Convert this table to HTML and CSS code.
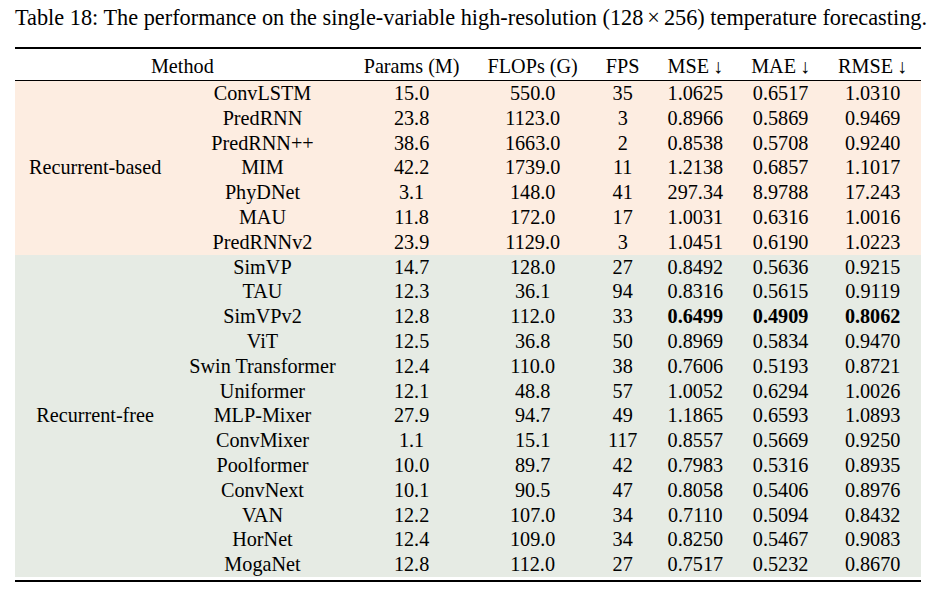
FILE: index.html
```html
<!DOCTYPE html>
<html>
<head>
<meta charset="utf-8">
<link rel="stylesheet" href="styles.css">
</head>
<body>
<div class="caption">Table 18: The performance on the single-variable high-resolution (128<span class="times">×</span>256) temperature forecasting.</div>
<table class="results">
  <thead>
    <tr>
      <th colspan="2">Method</th>
      <th>Params (M)</th>
      <th>FLOPs (G)</th>
      <th>FPS</th>
      <th>MSE<span class="arrow">↓</span></th>
      <th>MAE<span class="arrow">↓</span></th>
      <th>RMSE<span class="arrow">↓</span></th>
    </tr>
  </thead>
  <tbody class="group-rb">
    <tr><td class="group" rowspan="7">Recurrent-based</td><td>ConvLSTM</td><td>15.0</td><td>550.0</td><td>35</td><td>1.0625</td><td>0.6517</td><td>1.0310</td></tr>
    <tr><td>PredRNN</td><td>23.8</td><td>1123.0</td><td>3</td><td>0.8966</td><td>0.5869</td><td>0.9469</td></tr>
    <tr><td>PredRNN++</td><td>38.6</td><td>1663.0</td><td>2</td><td>0.8538</td><td>0.5708</td><td>0.9240</td></tr>
    <tr><td>MIM</td><td>42.2</td><td>1739.0</td><td>11</td><td>1.2138</td><td>0.6857</td><td>1.1017</td></tr>
    <tr><td>PhyDNet</td><td>3.1</td><td>148.0</td><td>41</td><td>297.34</td><td>8.9788</td><td>17.243</td></tr>
    <tr><td>MAU</td><td>11.8</td><td>172.0</td><td>17</td><td>1.0031</td><td>0.6316</td><td>1.0016</td></tr>
    <tr><td>PredRNNv2</td><td>23.9</td><td>1129.0</td><td>3</td><td>1.0451</td><td>0.6190</td><td>1.0223</td></tr>
  </tbody>
  <tbody class="group-rf">
    <tr><td class="group" rowspan="13">Recurrent-free</td><td>SimVP</td><td>14.7</td><td>128.0</td><td>27</td><td>0.8492</td><td>0.5636</td><td>0.9215</td></tr>
    <tr><td>TAU</td><td>12.3</td><td>36.1</td><td>94</td><td>0.8316</td><td>0.5615</td><td>0.9119</td></tr>
    <tr><td>SimVPv2</td><td>12.8</td><td>112.0</td><td>33</td><td class="best">0.6499</td><td class="best">0.4909</td><td class="best">0.8062</td></tr>
    <tr><td>ViT</td><td>12.5</td><td>36.8</td><td>50</td><td>0.8969</td><td>0.5834</td><td>0.9470</td></tr>
    <tr><td>Swin Transformer</td><td>12.4</td><td>110.0</td><td>38</td><td>0.7606</td><td>0.5193</td><td>0.8721</td></tr>
    <tr><td>Uniformer</td><td>12.1</td><td>48.8</td><td>57</td><td>1.0052</td><td>0.6294</td><td>1.0026</td></tr>
    <tr><td>MLP-Mixer</td><td>27.9</td><td>94.7</td><td>49</td><td>1.1865</td><td>0.6593</td><td>1.0893</td></tr>
    <tr><td>ConvMixer</td><td>1.1</td><td>15.1</td><td>117</td><td>0.8557</td><td>0.5669</td><td>0.9250</td></tr>
    <tr><td>Poolformer</td><td>10.0</td><td>89.7</td><td>42</td><td>0.7983</td><td>0.5316</td><td>0.8935</td></tr>
    <tr><td>ConvNext</td><td>10.1</td><td>90.5</td><td>47</td><td>0.8058</td><td>0.5406</td><td>0.8976</td></tr>
    <tr><td>VAN</td><td>12.2</td><td>107.0</td><td>34</td><td>0.7110</td><td>0.5094</td><td>0.8432</td></tr>
    <tr><td>HorNet</td><td>12.4</td><td>109.0</td><td>34</td><td>0.8250</td><td>0.5467</td><td>0.9083</td></tr>
    <tr><td>MogaNet</td><td>12.8</td><td>112.0</td><td>27</td><td>0.7517</td><td>0.5232</td><td>0.8670</td></tr>
  </tbody>
  <tfoot>
    <tr><td class="spacer" colspan="8"></td></tr>
  </tfoot>
</table>
</body>
</html>
```
FILE: styles.css
```css
html, body {
  margin: 0;
  padding: 0;
  background: #ffffff;
}

body {
  font-family: "Liberation Serif", "Times New Roman", serif;
  font-size: 20.2px;
  color: #000000;
  padding: 5px 0 0 15px;
}

.caption {
  font-size: 22.3px;
  line-height: 25px;
  white-space: nowrap;
  margin-bottom: 17px;
}

.times {
  padding: 0 4px;
}

.results {
  border-collapse: collapse;
  border-spacing: 0;
  border-top: 2px solid #000;
}

.results th,
.results td {
  padding: 0 14px;
  text-align: center;
  white-space: nowrap;
  font-weight: normal;
}

.results th {
  padding-top: 6px;
  padding-bottom: 2px;
  line-height: 23px;
  border-bottom: 1px solid #000;
}

.results td {
  height: 24.8px;
  line-height: 24.8px;
  box-sizing: border-box;
}

.arrow {
  margin-left: 4px;
}

.group-rb {
  background: #fdede1;
}

.group-rf {
  background: #e6ebe4;
}

.results td.group {
  vertical-align: middle;
}

.results td.best {
  font-weight: bold;
}

.results td.spacer {
  height: 4px;
  line-height: 0;
  padding: 0;
  border-bottom: 2px solid #000;
}
```
